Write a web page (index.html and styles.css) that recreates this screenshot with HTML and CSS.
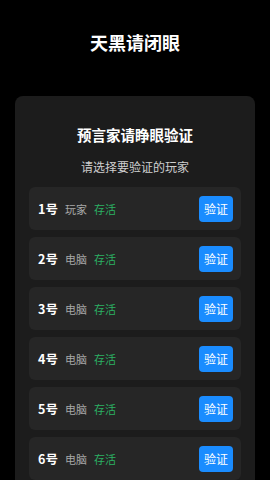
FILE: index.html
```html
<!DOCTYPE html>
<html lang="zh-CN">
<head>
  <meta charset="UTF-8">
  <title>天黑请闭眼</title>
  <link rel="stylesheet" href="styles.css">
</head>
<body>
  <h1 class="titulo">天黑请闭眼</h1>

  <div class="panel">
    <h2>预言家请睁眼验证</h2>
    <p class="sub">请选择要验证的玩家</p>

    <div class="lista">
      <div class="fila">
        <span class="num">1号</span>
        <span class="tipo">玩家</span>
        <span class="estado">存活</span>
        <button class="verificar">验证</button>
      </div>
      <div class="fila">
        <span class="num">2号</span>
        <span class="tipo">电脑</span>
        <span class="estado">存活</span>
        <button class="verificar">验证</button>
      </div>
      <div class="fila">
        <span class="num">3号</span>
        <span class="tipo">电脑</span>
        <span class="estado">存活</span>
        <button class="verificar">验证</button>
      </div>
      <div class="fila">
        <span class="num">4号</span>
        <span class="tipo">电脑</span>
        <span class="estado">存活</span>
        <button class="verificar">验证</button>
      </div>
      <div class="fila">
        <span class="num">5号</span>
        <span class="tipo">电脑</span>
        <span class="estado">存活</span>
        <button class="verificar">验证</button>
      </div>
      <div class="fila">
        <span class="num">6号</span>
        <span class="tipo">电脑</span>
        <span class="estado">存活</span>
        <button class="verificar">验证</button>
      </div>
    </div>
  </div>
</body>
</html>
```

FILE: styles.css
```css
body {
  font-family: "Noto Sans CJK SC", "Noto Sans", sans-serif;
  margin: 0;
  padding: 0;
  background-color: #000;
  color: #fff;
}

.titulo {
  margin: 0;
  padding-top: 30px;
  font-size: 18px;
  line-height: 24px;
  font-weight: 700;
  text-align: center;
}

.panel {
  margin: 42px 15px 0;
  padding: 29px 14px 14px;
  background: #1c1c1c;
  border-radius: 8px;
}

.panel h2 {
  margin: 0;
  font-size: 14.5px;
  line-height: 20px;
  font-weight: 700;
  text-align: center;
}

.sub {
  margin: 13px 0 0;
  font-size: 12px;
  line-height: 18px;
  color: #cfcfcf;
  text-align: center;
}

.lista {
  margin-top: 11px;
  display: flex;
  flex-direction: column;
  gap: 7px;
}

.fila {
  height: 43px;
  padding: 0 8px 0 9px;
  background: #262626;
  border-radius: 6px;
  display: flex;
  align-items: center;
}

.num {
  font-size: 12.5px;
  font-weight: 700;
  margin-right: 7px;
}

.tipo {
  font-size: 11px;
  color: #a8a8a8;
  margin-right: 7px;
}

.estado {
  font-size: 11px;
  color: #2bb063;
}

.verificar {
  margin-left: auto;
  width: 34px;
  height: 26px;
  padding: 0;
  border: none;
  border-radius: 4px;
  background-color: #1a8cff;
  color: #fff;
  font-family: inherit;
  font-size: 12px;
  cursor: pointer;
}
```
